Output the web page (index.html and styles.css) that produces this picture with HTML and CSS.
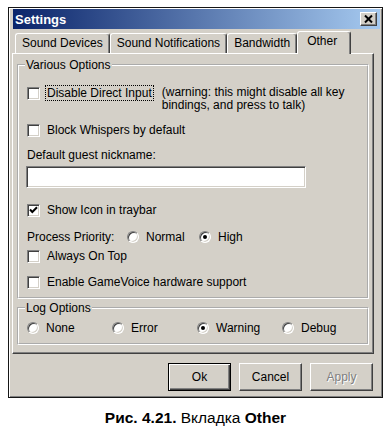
FILE: index.html
```html
<!DOCTYPE html>
<html lang="en">
<head>
<meta charset="utf-8">
<title>Settings</title>
<link rel="stylesheet" href="styles.css">
</head>
<body>
<div class="dialog">
  <div class="titlebar">
    <span class="title">Settings</span>
    <div class="close">
      <svg width="15" height="12" viewBox="0 0 15 12"><path d="M4 2.5 L11 9.5 M11 2.5 L4 9.5" stroke="#000" stroke-width="2" fill="none"/></svg>
    </div>
  </div>
  <div class="tabs">
    <div class="tab">Sound Devices</div>
    <div class="tab">Sound Notifications</div>
    <div class="tab">Bandwidth</div>
    <div class="tab active">Other</div>
  </div>
  <div class="panel">
    <fieldset class="group various">
      <legend>Various Options</legend>
      <div class="row-direct">
        <span class="cb"></span>
        <span class="lbl focus">Disable Direct Input</span>
        <span class="warn">(warning: this might disable all key<br>bindings, and press to talk)</span>
      </div>
      <div class="check row-whisper"><span class="cb"></span><span class="lbl">Block Whispers by default</span></div>
      <div class="field-label">Default guest nickname:</div>
      <div class="textbox"></div>
      <div class="check row-icon"><span class="cb"><svg width="9" height="9" viewBox="0 0 9 9"><path d="M1 3.5 L3.3 6 L8 1.2" stroke="#000" stroke-width="2" fill="none"/></svg></span><span class="lbl">Show Icon in traybar</span></div>
      <div class="priority">
        <span class="prio-label">Process Priority:</span>
        <span class="opt prio-normal"><span class="radio"></span>Normal</span>
        <span class="opt"><span class="radio on"></span>High</span>
      </div>
      <div class="check row-top"><span class="cb"></span><span class="lbl">Always On Top</span></div>
      <div class="check row-gv"><span class="cb"></span><span class="lbl">Enable GameVoice hardware support</span></div>
    </fieldset>
    <fieldset class="group log">
      <legend>Log Options</legend>
      <div class="log-row">
        <span class="opt"><span class="radio"></span>None</span>
        <span class="opt"><span class="radio"></span>Error</span>
        <span class="opt"><span class="radio on"></span>Warning</span>
        <span class="opt"><span class="radio"></span>Debug</span>
      </div>
    </fieldset>
  </div>
  <div class="buttons">
    <div class="btn default">Ok</div>
    <div class="btn">Cancel</div>
    <div class="btn disabled">Apply</div>
  </div>
</div>
<p class="caption"><b>Рис. 4.21.</b> Вкладка <b>Other</b></p>
</body>
</html>
```
FILE: styles.css
```css
* { box-sizing: border-box; }

body {
  margin: 7px 0 0 8px;
  background: #fff;
  font-family: "Liberation Sans", Arial, sans-serif;
  font-size: 12px;
  color: #000;
}

.dialog {
  width: 375px;
  height: 391px;
  border: 1px solid #161616;
  background: #d4d0c8;
  box-shadow: inset 1px 1px 0 #fff, inset -1px -1px 0 #808080;
  padding: 1px 2px 0 3px;
  display: flex;
  flex-direction: column;
}

.titlebar {
  margin-left: 1px;
  height: 20px;
  flex: none;
  background: linear-gradient(to right, #0a246a, #a6caf0);
  display: flex;
  align-items: center;
  justify-content: space-between;
  padding: 0 3px 0 2px;
}

.title {
  color: #fff;
  font-weight: bold;
  font-size: 13px;
}

.close {
  width: 17px;
  height: 14px;
  background: #d4d0c8;
  border: 1px solid;
  border-color: #fff #404040 #404040 #fff;
  box-shadow: inset -1px -1px 0 #808080;
  display: flex;
}

.tabs {
  display: flex;
  align-items: flex-end;
  height: 22px;
  flex: none;
  margin-top: 2px;
  padding-left: 3px;
}

.tab {
  height: 20px;
  padding: 0 6px;
  line-height: 19px;
  border: 1px solid;
  border-bottom: 0;
  border-color: #fff #404040 transparent #fff;
  border-radius: 3px 3px 0 0;
  box-shadow: inset -1px 0 0 #808080;
  white-space: nowrap;
}

.tab.active {
  height: 23px;
  margin-bottom: -1px;
  padding: 0 13px 0 9px;
  line-height: 19px;
  background: #d4d0c8;
  position: relative;
  z-index: 1;
}

.panel {
  height: 301px;
  flex: none;
  margin-right: 6px;
  border: 1px solid;
  border-color: #fff #404040 #404040 #fff;
  box-shadow: inset -1px -1px 0 #808080;
  padding: 4px 4px 0 4px;
}

.group {
  margin: 0;
  padding: 0 0 0 8px;
  border: 2px groove #fff;
  min-width: 0;
}

.group legend {
  padding: 0 1px;
  margin-left: -2px;
  line-height: 14px;
}

.various { height: 241px; }
.log { height: 44px; margin-top: 2px; }

.cb {
  flex: none;
  width: 13px;
  height: 13px;
  background: #fff;
  border: 1px solid;
  border-color: #808080 #fff #fff #808080;
  box-shadow: inset 1px 1px 0 #404040, inset -1px -1px 0 #d4d0c8;
  display: flex;
  align-items: center;
  justify-content: center;
}

.lbl {
  margin-left: 5px;
  padding: 0 1px;
  border: 1px dotted transparent;
  line-height: 14px;
  white-space: nowrap;
}

.lbl.focus { border-color: #000; }

.row-direct {
  display: flex;
  align-items: flex-start;
  margin-top: 13px;
}

.row-direct .cb { margin-top: 2px; }

.warn {
  margin-left: 8px;
  margin-top: 1px;
  line-height: 13px;
}

.check {
  display: flex;
  align-items: center;
  height: 16px;
}

.row-whisper { margin-top: 10px; }

.field-label {
  margin-top: 10px;
  line-height: 14px;
}

.textbox {
  margin-top: 4px;
  margin-left: -1px;
  width: 280px;
  height: 22px;
  background: #fff;
  border: 1px solid;
  border-color: #808080 #fff #fff #808080;
  box-shadow: inset 1px 1px 0 #404040, inset -1px -1px 0 #d4d0c8;
}

.row-icon { margin-top: 14px; }

.priority {
  display: flex;
  align-items: center;
  height: 16px;
  margin-top: 11px;
}

.prio-label { width: 100px; }
.prio-normal { width: 72px; }

.row-top { margin-top: 3px; }
.row-gv { margin-top: 10px; }

.opt {
  display: flex;
  align-items: center;
  gap: 7px;
  white-space: nowrap;
}

.radio {
  flex: none;
  width: 12px;
  height: 12px;
  border-radius: 50%;
  background: #fff;
  border: 1px solid;
  border-color: #808080 #fff #fff #808080;
  box-shadow: inset 1px 1px 0 #404040, inset -1px -1px 0 #d4d0c8;
  display: flex;
  align-items: center;
  justify-content: center;
}

.radio.on::after {
  content: "";
  width: 4px;
  height: 4px;
  border-radius: 50%;
  background: #000;
}

.log-row {
  display: grid;
  grid-template-columns: repeat(4, 85px);
  align-items: center;
  height: 16px;
  margin-top: 5px;
}

.buttons {
  display: flex;
  justify-content: flex-end;
  gap: 8px;
  margin-top: 9px;
  padding-right: 7px;
}

.btn {
  width: 63px;
  height: 28px;
  border: 1px solid;
  border-color: #fff #404040 #404040 #fff;
  box-shadow: inset -1px -1px 0 #808080;
  display: flex;
  align-items: center;
  justify-content: center;
}

.btn.default {
  border-color: #000;
  box-shadow: inset 1px 1px 0 #fff, inset -1px -1px 0 #404040, inset -2px -2px 0 #808080;
}

.btn.disabled {
  color: #808080;
  text-shadow: 1px 1px 0 #fff;
}

.caption {
  width: 375px;
  margin: 11px 0 0;
  text-align: center;
  font-size: 15.5px;
  line-height: 18px;
}
```
